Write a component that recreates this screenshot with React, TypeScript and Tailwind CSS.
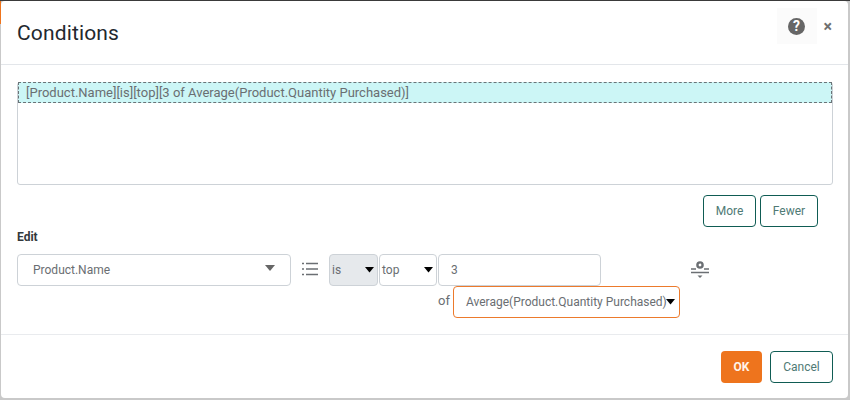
import React from "react";

const Caret = ({ className, size = 9 }: { className: string; size?: number }) => (
  <svg width={size} height={size * 0.6} viewBox="0 0 10 6" className={className}>
    <path d="M0 0h10L5 6z" fill="currentColor" />
  </svg>
);

const ListIcon = () => (
  <svg width="16" height="14" viewBox="0 0 16 14" fill="none" stroke="#6b6f73" className="block">
    <path d="M0 1.500h2M4 1.500h12M0 7h2M4 7h12M0 12.500h2M4 12.500h12" strokeWidth="1.300" />
  </svg>
);

const FilterGearIcon = () => (
  <svg width="20" height="18" viewBox="0 0 20 18" fill="none" className="block">
    <circle cx="10" cy="4" r="2.600" stroke="#6b6f73" strokeWidth="2.400" />
    <path d="M1 8h5M14 8h5M1 11.500h18" stroke="#6b6f73" strokeWidth="1.300" />
    <path d="M7.500 14.500h5L10 17z" fill="#6b6f73" />
  </svg>
);

const HelpIcon = () => (
  <div className="w-[17px] h-[17px] rounded-full bg-[#666666] flex items-center justify-center text-white text-[14px] font-bold leading-none">
    ?
  </div>
);

export default function App() {
  return (
    <div className="relative w-[850px] h-[400px] bg-[#c9c9c9] overflow-hidden font-['Roboto',sans-serif] border-t border-[#3a3a3a] px-px">
      {/* sliver of the page behind the dialog */}
      <div className="absolute left-0 top-0 w-px h-[23px] bg-[#ee741d]" />
      <div className="w-[847px] h-[397px] bg-white rounded-[4px] flex flex-col">
        <div className="h-[64px] flex justify-between border-b border-[#e3e6ea] pl-4 pr-[16px] shrink-0">
          <h2 className="text-[21px] leading-[24px] text-[#22282e] font-normal mt-5 tracking-[0.15px]">Conditions</h2>
          <div className="flex items-start mt-[7px]">
            <div className="w-10 h-[36px] bg-[#fbfbfb] flex items-center justify-center -mr-px">
              <HelpIcon />
            </div>
            <span className="ml-2 mt-[11px] text-[#6f6f6f] text-[16px] leading-[16px] font-bold">×</span>
          </div>
        </div>

        <div className="flex-1 px-4 pt-[17px]">
          <div className="w-[816px] h-[103px] border border-[#cdd2d7] rounded-[3px]">
            <div className="h-[21px] -mt-px bg-[#ccf6f6] border border-dashed border-[#6a7478] pl-[7px] text-[13px] leading-[20px] text-[#6a6e72] whitespace-nowrap">
              [Product.Name][is][top][3 of Average(Product.Quantity Purchased)]
            </div>
          </div>

          <div className="flex justify-end gap-1 mt-[10px] pr-[14px]">
            <button className="w-[53px] h-8 border border-[#0f5c54] rounded-[4px] text-[12px] text-[#4f7a75]">More</button>
            <button className="w-[58px] h-8 border border-[#0f5c54] rounded-[4px] text-[12px] text-[#4f7a75]">Fewer</button>
          </div>

          <div className="text-[12px] leading-[14px] font-bold text-[#33383d] mt-[3px]">Edit</div>

          <div className="flex items-start mt-[10px]">
            <div className="w-[274px] h-8 border border-[#cdd2d7] rounded-[4px] flex items-center justify-between pl-[15px] pr-[15px] text-[12px] text-[#6a6e72]">
              <span>Product.Name</span>
              <Caret className="text-[#666666] -mt-1" size={10} />
            </div>
            <div className="w-[38px] pl-[11px] pt-2">
              <ListIcon />
            </div>
            <div className="flex flex-col">
              <div className="flex gap-px">
                <div className="w-[49px] h-8 bg-[#e6e9ec] border border-[#cdd2d7] rounded-[4px] flex items-center justify-between pl-[2px] pr-[3px] text-[12px] text-[#6a6e72]">
                  <span>is</span>
                  <Caret className="text-black" />
                </div>
                <div className="w-[58px] h-8 border border-[#cdd2d7] rounded-[4px] flex items-center justify-between pl-[2px] pr-[3px] text-[12px] text-[#6a6e72]">
                  <span>top</span>
                  <Caret className="text-black" />
                </div>
                <div className="w-[163px] h-8 border border-[#cdd2d7] rounded-[4px] flex items-center pl-3 text-[12px] text-[#6a6e72]">3</div>
              </div>
              <div className="flex items-center gap-[3px] ml-[109px]">
                <span className="text-[13px] text-[#6a6e72] -mt-[3px]">of</span>
                <div className="w-[227px] h-8 border border-[#ec7a2c] rounded-[4px] flex items-center pl-3 text-[12px] text-[#6a6e72] whitespace-nowrap">
                  <span>Average(Product.Quantity Purchased)</span>
                  <Caret className="text-black shrink-0 -ml-px" />
                </div>
              </div>
            </div>
            <div className="ml-[10px] pt-[7px]">
              <FilterGearIcon />
            </div>
          </div>
        </div>

        <div className="h-[64px] border-t border-[#e9ebee] flex justify-end gap-2 pr-[15px] pt-4 shrink-0">
          <button className="w-[41px] h-8 bg-[#ee741d] rounded-[4px] text-[12px] font-bold text-[#fff3e8]">OK</button>
          <button className="w-[63px] h-8 border border-[#0f5c54] rounded-[4px] text-[12px] text-[#4f7a75]">Cancel</button>
        </div>
      </div>
    </div>
  );
}
